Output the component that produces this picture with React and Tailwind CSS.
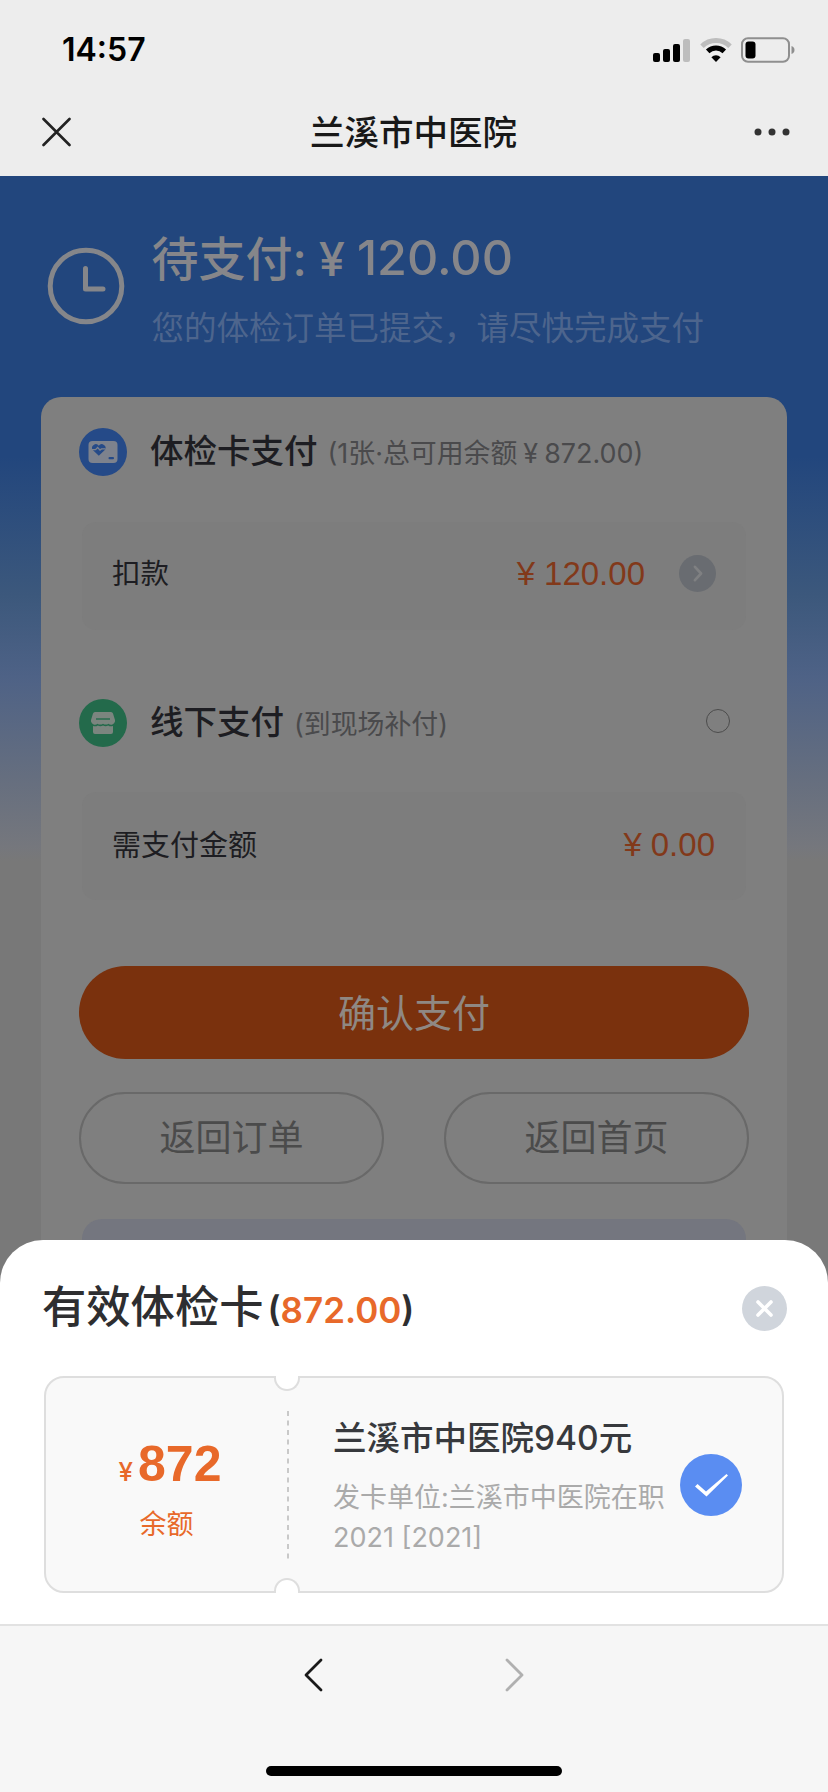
import React from 'react';

function StatusBar() {
  return (
    <div className="flex h-[88px] items-center justify-between pt-[12px] pl-[62px] pr-[33px]">
      <span className="text-[32px] leading-none font-semibold text-black">14:57</span>
      <div className="flex items-center gap-[9px]">
        <svg className="h-[26px] w-[38px]" viewBox="0 0 38 26">
          <rect x="0" y="16" width="7" height="9" rx="2" />
          <rect x="10" y="12" width="7" height="13" rx="2" />
          <rect x="20" y="7" width="7" height="18" rx="2" />
          <rect x="30" y="2" width="7" height="23" rx="2" fill="#bdbdbd" />
        </svg>
        <svg className="h-[26px] w-[32px]" viewBox="0 0 32 26" fill="none">
          <path d="M2 9.2a20 20 0 0 1 28 0" stroke="#bdbdbd" strokeWidth="5" />
          <path d="M7.7 14.4a12 12 0 0 1 16.6 0" stroke="#000" strokeWidth="5" />
          <path d="M16 25l-4.6-4.8a6.6 6.6 0 0 1 9.2 0z" fill="#000" />
        </svg>
        <svg className="h-[26px] w-[54px]" viewBox="0 0 54 26">
          <rect x="1" y="1.2" width="47" height="23.6" rx="6" fill="none" stroke="#8f8f8f" strokeWidth="2" />
          <rect x="4.5" y="4.5" width="10" height="17" rx="3" />
          <path d="M50.5 9v8c2.400-.8 3-2.300 3-4s-.6-3.200-3-4z" fill="#8f8f8f" />
        </svg>
      </div>
    </div>
  );
}

function TitleBar() {
  return (
    <div className="flex h-[88px] items-center justify-between pl-[42px] pr-[37px]">
      <svg className="h-[30px] w-[29px]" viewBox="0 0 29 30" fill="none" stroke="#222" strokeWidth="2.600" strokeLinecap="round">
        <path d="M1.500 2l26 26M27.500 2l-26 26" />
      </svg>
      <h1 className="ml-[3px] pt-[2px] text-[34.5px] leading-none font-medium text-[#181818]">兰溪市中医院</h1>
      <svg className="h-[8px] w-[38px]" viewBox="0 0 38 8" fill="#333">
        <circle cx="5" cy="4" r="3.500" />
        <circle cx="19" cy="4" r="3.500" />
        <circle cx="33" cy="4" r="3.500" />
      </svg>
    </div>
  );
}

function CardIcon() {
  return (
    <svg className="h-[48px] w-[48px]" viewBox="0 0 48 48">
      <circle cx="24" cy="24" r="24" fill="#254a88" />
      <rect x="9.500" y="13" width="29" height="22" rx="4" fill="#7d828d" />
      <path d="M19.800 27.800l-6-5.800a3.500 3.500 0 0 1 6-4.200 3.500 3.500 0 0 1 6 4.200z" fill="#254a88" />
      <path d="M12.500 21.700h4l2.200-2.200 2.300 2.600 1.500-1.200h4" stroke="#7d828d" strokeWidth="1.300" fill="none" />
      <rect x="29.500" y="29" width="5.500" height="2.200" rx="1" fill="#254a88" />
    </svg>
  );
}

function StoreIcon() {
  return (
    <svg className="h-[48px] w-[48px]" viewBox="0 0 48 48">
      <circle cx="24" cy="24" r="24" fill="#236a4b" />
      <path d="M16 13h16q1.500 0 2 1.500l2 6.500v1.500a4 4 0 0 1-6.500 2.200 5 5 0 0 1-5.500 0 5 5 0 0 1-5.500 0A4 4 0 0 1 12 22.500V21l2-6.500q.5-1.500 2-1.500z" fill="#7b857f" />
      <path d="M14 27q3 .8 4.800-.6 2.600 1.600 5.200 0 2.600 1.600 5.200 0 1.800 1.400 4.800.6V33q0 2-2 2H16q-2 0-2-2z" fill="#7b857f" />
      <path d="M17 20h14" stroke="#236a4b" strokeWidth="1.400" />
    </svg>
  );
}

function Hero() {
  return (
    <div className="flex h-[221px] pl-[46.5px] pt-[51px]">
      <svg className="mt-[20px] h-[78px] w-[78px]" viewBox="0 0 78 78" fill="none" stroke="#85868a" strokeWidth="5">
        <circle cx="39" cy="39" r="35.800" />
        <path d="M38.500 21.500v20.500h17.500" strokeLinecap="round" strokeLinejoin="round" />
      </svg>
      <div className="ml-[27px] whitespace-nowrap">
        <div className="flex h-[62px] items-center text-[47px] leading-none font-medium text-[#86868a]">
          <span>待支付:</span>
          <span className="ml-[12px]">¥</span>
          <span className="ml-[12px] text-[48.5px]">120.00</span>
        </div>
        <div className="mt-[23px] flex h-[34px] items-center text-[32.5px] leading-none text-[#4d658d]">
          您的体检订单已提交，请尽快完成支付
        </div>
      </div>
    </div>
  );
}

function SectionTitle({ icon, title, children }) {
  return (
    <div className="flex h-[50px] items-center whitespace-nowrap">
      {icon}
      <span className="ml-[23px] text-[33.5px] leading-none font-medium text-[#1d1d22]">{title}</span>
      <span className="ml-[10px] flex items-baseline pt-[2px] text-[26.9px] leading-none text-[#4a4a4c]">{children}</span>
    </div>
  );
}

function Price({ value }) {
  return (
    <span className="flex items-center font-['Liberation_Sans','Noto_Sans_CJK_SC',sans-serif] text-[33px] leading-none text-[#82391a]">
      <span>¥</span>
      <span className="ml-[9px]">{value}</span>
    </span>
  );
}

function PayCard() {
  return (
    <div className="mx-[41px] h-[900px] rounded-t-[20px] bg-[#7f7f7f] px-[38px] pt-[30px]">
      <SectionTitle icon={<CardIcon />} title="体检卡支付">
        <span>(1张·总可用余额</span>
        <span className="ml-[6px]">¥</span>
        <span className="ml-[6px]">872.00)</span>
      </SectionTitle>
      <div className="mx-[3px] mt-[45px] flex h-[108px] items-center justify-between rounded-[14px] bg-[#7d7d7d] pl-[30px] pr-[30px] pb-[6px]">
        <span className="pt-[2px] text-[28.5px] leading-none text-[#1d1d22]">扣款</span>
        <div className="flex items-center">
          <Price value="120.00" />
          <svg className="ml-[34px] h-[37px] w-[37px]" viewBox="0 0 36 36" fill="none">
            <circle cx="18" cy="18" r="18" fill="#696c71" />
            <path d="M15.500 11.500l6 6.500-6 6.500" stroke="#7f8082" strokeWidth="2.600" strokeLinecap="round" strokeLinejoin="round" />
          </svg>
        </div>
      </div>

      <div className="mt-[68px] flex items-center justify-between pr-[19px]">
        <SectionTitle icon={<StoreIcon />} title="线下支付">
          (到现场补付)
        </SectionTitle>
        <span className="mb-[4px] h-[24px] w-[24px] rounded-full border border-[#4c4c4c]" />
      </div>
      <div className="mx-[3px] mt-[44px] flex h-[108px] items-center justify-between rounded-[14px] bg-[#7d7d7d] pl-[30px] pr-[31px] pb-[3px]">
        <span className="pt-[1px] text-[29px] leading-none text-[#1d1d22]">需支付金额</span>
        <Price value="0.00" />
      </div>

      <button className="mt-[66px] flex h-[93px] w-full items-center justify-center rounded-full bg-[#7a310d] text-[38px] leading-none text-[#8f8883]">
        确认支付
      </button>
      <div className="mt-[33px] grid grid-cols-2 gap-[60px]">
        {['返回订单', '返回首页'].map((label) => (
          <button
            key={label}
            className="flex h-[92px] items-center justify-center rounded-full border-2 border-[#696969] text-[36px] leading-none text-[#4b4b4b]"
          >
            {label}
          </button>
        ))}
      </div>
      <div className="mx-[3px] mt-[35px] h-[60px] rounded-[20px] bg-[#74767f]" />
    </div>
  );
}

function Ticket() {
  return (
    <div className="relative mx-[44px] mt-[44px] flex h-[217px] rounded-[20px] border-2 border-[#dedede] bg-[#f9f9f9]">
      {/* notches cut into the top and bottom edges */}
      <span className="absolute -top-[2px] left-[228px] h-[15px] w-[26px] rounded-b-full border-2 border-t-0 border-[#dedede] bg-white" />
      <span className="absolute -bottom-[2px] left-[228px] h-[15px] w-[26px] rounded-t-full border-2 border-b-0 border-[#dedede] bg-white" />
      <div className="flex w-[241px] flex-col items-center pt-[56px] text-[#e8692a]">
        <div className="ml-[7px] flex items-baseline leading-none">
          <span className="text-[26px] font-medium">¥</span>
          <span className="ml-[5px] font-['Liberation_Sans',sans-serif] text-[50px] leading-[60px] font-bold">872</span>
        </div>
        <span className="mt-[16px] text-[27px] leading-[30px]">余额</span>
      </div>
      <svg className="mt-[33px] h-[148px] w-[2px]" viewBox="0 0 2 148">
        <path d="M1 0v148" stroke="#c9c9c9" strokeWidth="2" strokeDasharray="5 4.500" />
      </svg>
      <div className="ml-[44px] pt-[38px] whitespace-nowrap">
        <h3 className="text-[33.5px] leading-[44px] font-medium text-[#37393d]">兰溪市中医院940元</h3>
        <p className="mt-[18px] text-[27px] leading-[40px] text-[#aaa]">
          发卡单位:兰溪市中医院在职
          <br />
          2021 [2021]
        </p>
      </div>
      <svg className="mt-[76px] ml-auto mr-[40px] h-[62px] w-[62px] shrink-0" viewBox="0 0 62 62" fill="none">
        <circle cx="31" cy="31" r="31" fill="#5a8df2" />
        <path d="M15 32.500l2.500-2.500 8.500 7.500L46.500 20l1.500 1.500-21.500 21z" fill="#fff" />
      </svg>
    </div>
  );
}

function CardSheet() {
  return (
    <div className="absolute inset-x-0 top-[1240px] h-[385px] rounded-t-[43px] bg-white">
      <div className="flex items-center justify-between pt-[45px] pl-[42px] pr-[41px]">
        <h2 className="flex items-baseline text-[44.3px] leading-[44px] font-medium text-[#2e2e30]">
          有效体检卡
          <span className="ml-[4px] text-[35px] font-semibold">
            (<span className="text-[#e8692a]">872.00</span>)
          </span>
        </h2>
        <svg className="h-[45px] w-[45px]" viewBox="0 0 45 45">
          <circle cx="22.500" cy="22.500" r="22.500" fill="#d0d5dc" />
          <path d="M16 16l13 13M29 16l-13 13" stroke="#fff" strokeWidth="3.600" strokeLinecap="round" />
        </svg>
      </div>
      <Ticket />
    </div>
  );
}

function BottomNav() {
  return (
    <div className="absolute inset-x-0 top-[1624px] flex h-[168px] flex-col items-center justify-between border-t-2 border-[#e2e2e2] bg-[#f6f6f6] pt-[31px] pb-[16px]">
      <div className="flex gap-[182px]">
        <svg className="h-[36px] w-[20px]" viewBox="0 0 20 36" fill="none" stroke="#1a1a1a" strokeWidth="2.800" strokeLinecap="round" strokeLinejoin="round">
          <path d="M18 3L3 18l15 15" />
        </svg>
        <svg className="h-[36px] w-[20px]" viewBox="0 0 20 36" fill="none" stroke="#b0b0b0" strokeWidth="2.800" strokeLinecap="round" strokeLinejoin="round">
          <path d="M2 3l15 15L2 33" />
        </svg>
      </div>
      <div className="h-[10px] w-[296px] rounded-full bg-black" />
    </div>
  );
}

export default function App() {
  return (
    <div className="relative h-[1792px] w-[828px] overflow-hidden bg-[#797979] font-['Inter','Noto_Sans_CJK_SC',sans-serif]">
      <header className="h-[176px] bg-[#ededed]">
        <StatusBar />
        <TitleBar />
      </header>
      <main className="h-[1064px] bg-[linear-gradient(to_bottom,#22467d_0px,#22467d_280px,#3c587c_420px,#4e6286_500px,#656e7f_600px,#75777d_670px,#787878_685px)]">
        <Hero />
        <PayCard />
      </main>
      <CardSheet />
      <BottomNav />
    </div>
  );
}
